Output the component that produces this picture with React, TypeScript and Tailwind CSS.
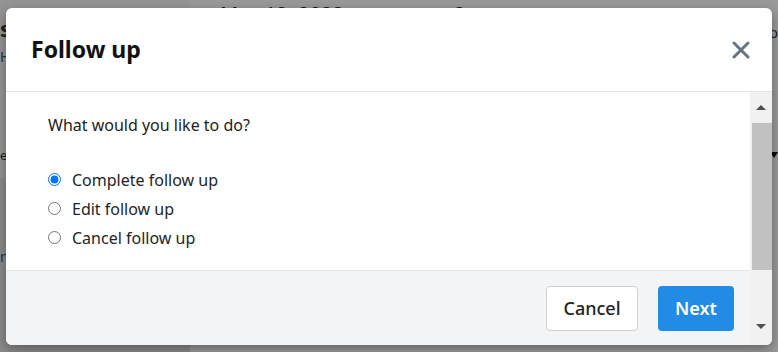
import { useState } from "react";

const options = [
  { id: "complete", label: "Complete follow up" },
  { id: "edit", label: "Edit follow up" },
  { id: "cancel", label: "Cancel follow up" },
];

function CloseIcon() {
  return (
    <svg width="18" height="18" viewBox="0 0 18 18" fill="none">
      <path d="M2 2L16 16M16 2L2 16" stroke="#667380" strokeWidth="3" strokeLinecap="round" />
    </svg>
  );
}

function FakeScrollbar() {
  return (
    <div className="flex w-[22px] shrink-0 flex-col bg-[#f1f1f1]">
      <div className="flex h-[31px] items-center justify-center">
        <div className="h-0 w-0 border-x-[5px] border-b-[5px] border-x-transparent border-b-[#505050]" />
      </div>
      <div className="ml-[2px] h-[147px] bg-[#c1c1c1]" />
      <div className="flex flex-1 items-end justify-center pb-[16px]">
        <div className="h-0 w-0 border-x-[5px] border-t-[5px] border-x-transparent border-t-[#505050]" />
      </div>
    </div>
  );
}

export default function App() {
  const [choice, setChoice] = useState("complete");

  return (
    <div className="relative h-[352px] w-[778px] overflow-hidden bg-white font-['Noto_Sans',sans-serif]">
      {/* Page behind the dialog (only slivers show) */}
      <div className="flex h-full">
        <div className="flex w-[190px] shrink-0 flex-col bg-[#f7f7f7] text-[#333]">
          <span className="mt-[16px] text-[22px] font-bold leading-[24px]">s</span>
          <span className="mt-[8px] text-[14px] leading-[18px] text-gray-600">H</span>
          <span className="mt-[80px] text-[13px] leading-[18px]">e</span>
          <div className="mt-[14px] flex flex-1 flex-col bg-[#e6e6e6] pt-[70px]">
            <span className="text-[14px] leading-[18px] text-[#1a5a9a]">n</span>
          </div>
        </div>
        <div className="flex flex-1 flex-col">
          <div className="flex h-[40px] items-start gap-[110px] pl-[30px] pt-[3px] text-[20px] leading-[22px] text-[#222]">
            <span>May 12, 2022</span>
            <span>2</span>
          </div>
          <div className="mt-[10px] border-t border-gray-300" />
          <div className="mt-[60px] border-t border-gray-300" />
        </div>
        <div className="flex w-[6px] shrink-0 flex-col items-end">
          <span className="mt-[24px] text-[14px] leading-[18px] text-[#333]">o</span>
          <div className="mt-[110px] h-0 w-0 border-x-[4px] border-t-[6px] border-x-transparent border-t-black" />
        </div>
      </div>

      {/* Overlay */}
      <div className="absolute inset-0 bg-black/40" />

      {/* Dialog */}
      <div className="absolute left-[6px] top-[8px] flex h-[337px] w-[766px] flex-col overflow-hidden rounded-[6px] bg-white shadow-[0_4px_12px_rgba(0,0,0,0.35)]">
        <div className="flex h-[84px] shrink-0 items-center justify-between border-b border-[#e3e3e3] pl-[25px] pr-[19px]">
          <h2 className="text-[23px] font-bold leading-none text-[#111]">Follow up</h2>
          <button className="flex h-[24px] w-[24px] items-center justify-center">
            <CloseIcon />
          </button>
        </div>

        <div className="flex flex-1">
          <div className="flex flex-1 flex-col">
            <div className="h-[178px] shrink-0 pl-[42px] pt-[23px] text-[#222]">
              <p className="text-[16px] leading-[20px]">What would you like to do?</p>
              <div className="mt-[30px] flex flex-col">
                {options.map((o) => (
                  <label key={o.id} className="flex h-[29px] items-center gap-[11px] text-[16px] text-[#212529]">
                    <input
                      type="radio"
                      name="followup"
                      checked={choice === o.id}
                      onChange={() => setChoice(o.id)}
                      className="m-0 h-[13px] w-[13px] accent-[#0075ff]"
                    />
                    {o.label}
                  </label>
                ))}
              </div>
            </div>
            <div className="flex flex-1 items-center justify-end gap-[20px] border-t border-[#e3e3e3] bg-[#f3f4f6] pr-[16px]">
              <button className="h-[45px] w-[92px] rounded-[4px] border border-[#d0d0d0] bg-white text-[18px] font-medium text-[#222]">
                Cancel
              </button>
              <button className="h-[45px] w-[76px] rounded-[4px] bg-[#228be6] text-[18px] font-semibold text-white">
                Next
              </button>
            </div>
          </div>
          <FakeScrollbar />
        </div>
      </div>
    </div>
  );
}
